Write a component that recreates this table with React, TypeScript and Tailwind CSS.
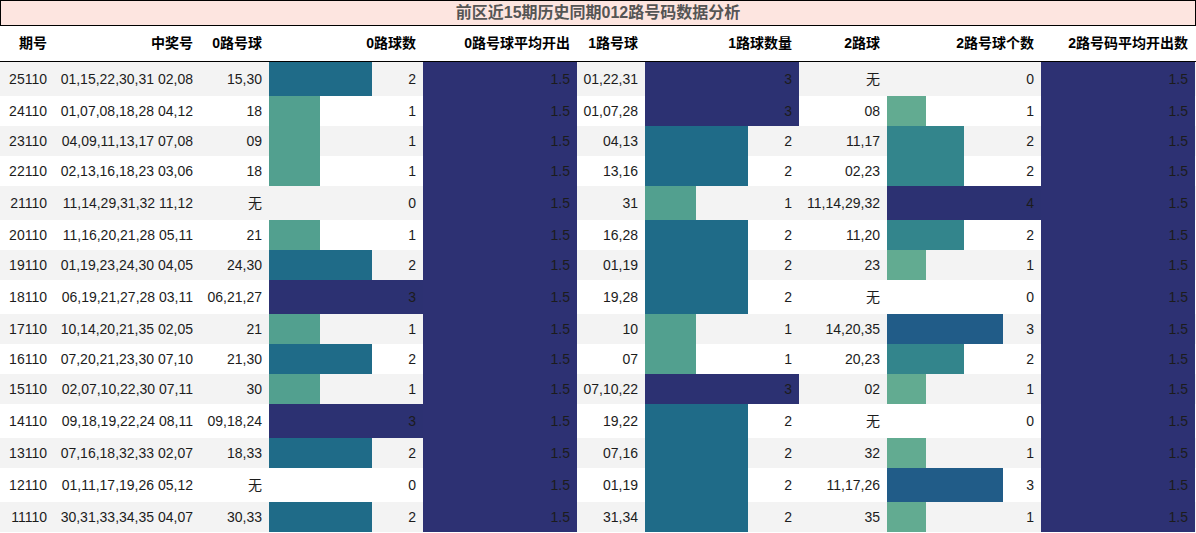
import React from 'react';

interface DrawRow {
  period: string;
  numbers: string;
  zeroBalls: string;
  zeroCount: number;
  oneBalls: string;
  oneCount: number;
  twoBalls: string;
  twoCount: number;
}

const rows: DrawRow[] = [
  { period: '25110', numbers: '01,15,22,30,31 02,08', zeroBalls: '15,30', zeroCount: 2, oneBalls: '01,22,31', oneCount: 3, twoBalls: '无', twoCount: 0 },
  { period: '24110', numbers: '01,07,08,18,28 04,12', zeroBalls: '18', zeroCount: 1, oneBalls: '01,07,28', oneCount: 3, twoBalls: '08', twoCount: 1 },
  { period: '23110', numbers: '04,09,11,13,17 07,08', zeroBalls: '09', zeroCount: 1, oneBalls: '04,13', oneCount: 2, twoBalls: '11,17', twoCount: 2 },
  { period: '22110', numbers: '02,13,16,18,23 03,06', zeroBalls: '18', zeroCount: 1, oneBalls: '13,16', oneCount: 2, twoBalls: '02,23', twoCount: 2 },
  { period: '21110', numbers: '11,14,29,31,32 11,12', zeroBalls: '无', zeroCount: 0, oneBalls: '31', oneCount: 1, twoBalls: '11,14,29,32', twoCount: 4 },
  { period: '20110', numbers: '11,16,20,21,28 05,11', zeroBalls: '21', zeroCount: 1, oneBalls: '16,28', oneCount: 2, twoBalls: '11,20', twoCount: 2 },
  { period: '19110', numbers: '01,19,23,24,30 04,05', zeroBalls: '24,30', zeroCount: 2, oneBalls: '01,19', oneCount: 2, twoBalls: '23', twoCount: 1 },
  { period: '18110', numbers: '06,19,21,27,28 03,11', zeroBalls: '06,21,27', zeroCount: 3, oneBalls: '19,28', oneCount: 2, twoBalls: '无', twoCount: 0 },
  { period: '17110', numbers: '10,14,20,21,35 02,05', zeroBalls: '21', zeroCount: 1, oneBalls: '10', oneCount: 1, twoBalls: '14,20,35', twoCount: 3 },
  { period: '16110', numbers: '07,20,21,23,30 07,10', zeroBalls: '21,30', zeroCount: 2, oneBalls: '07', oneCount: 1, twoBalls: '20,23', twoCount: 2 },
  { period: '15110', numbers: '02,07,10,22,30 07,11', zeroBalls: '30', zeroCount: 1, oneBalls: '07,10,22', oneCount: 3, twoBalls: '02', twoCount: 1 },
  { period: '14110', numbers: '09,18,19,22,24 08,11', zeroBalls: '09,18,24', zeroCount: 3, oneBalls: '19,22', oneCount: 2, twoBalls: '无', twoCount: 0 },
  { period: '13110', numbers: '07,16,18,32,33 02,07', zeroBalls: '18,33', zeroCount: 2, oneBalls: '07,16', oneCount: 2, twoBalls: '32', twoCount: 1 },
  { period: '12110', numbers: '01,11,17,19,26 05,12', zeroBalls: '无', zeroCount: 0, oneBalls: '01,19', oneCount: 2, twoBalls: '11,17,26', twoCount: 3 },
  { period: '11110', numbers: '30,31,33,34,35 04,07', zeroBalls: '30,33', zeroCount: 2, oneBalls: '31,34', oneCount: 2, twoBalls: '35', twoCount: 1 },
];

const headers = [
  '期号',
  '中奖号',
  '0路号球',
  '0路球数',
  '0路号球平均开出',
  '1路号球',
  '1路球数量',
  '2路球',
  '2路号球个数',
  '2路号码平均开出数',
];

// colour steps of the bars (crest-like scale)
const colorsOf3 = ['', '#52a08f', '#1f6b88', '#2c3172'];
const colorsOf4 = ['', '#62ab91', '#33858c', '#215c88', '#2c3172'];
const avgColor = '#2d3173';

const gridCols =
  'grid grid-cols-[54px_146px_69px_154px_154px_68px_154px_88px_154px_154px]';

const BarCell: React.FC<{ value: number; max: number; color: string; label: string }> = ({
  value,
  max,
  color,
  label,
}) => (
  <div className="relative flex items-center justify-end pr-[7px]">
    {value > 0 && (
      <div
        className="absolute left-0 top-0 bottom-0"
        style={{ width: `${(value / max) * 100}%`, backgroundColor: color }}
      />
    )}
    <span className="relative">{label}</span>
  </div>
);

const TextCell: React.FC<{ children: React.ReactNode }> = ({ children }) => (
  <div className="flex items-center justify-end pr-[7px] whitespace-nowrap">{children}</div>
);

export default function App() {
  return (
    <div
      className="w-[1196px] bg-white text-[14px] text-[#1c1c1c]"
      style={{ fontFamily: '"Liberation Sans", "Noto Sans CJK SC", sans-serif' }}
    >
      {/* Title */}
      <div className="w-[1196px] h-[26px] border border-black bg-[#fde5e0] flex items-center justify-center">
        <span className="text-[16px] font-bold text-[#555555] leading-none">
          前区近15期历史同期012路号码数据分析
        </span>
      </div>

      {/* Header */}
      <div className={`${gridCols} h-[36px] border-b border-black font-bold text-black`}>
        {headers.map((h) => (
          <div key={h} className="flex items-center justify-end pr-[7px] whitespace-nowrap">
            {h}
          </div>
        ))}
      </div>

      {/* Rows */}
      {rows.map((r, i) => {
        const tall = [r.zeroBalls, r.oneBalls, r.twoBalls].includes('无');
        return (
          <div
            key={r.period}
            className={`${gridCols} ${tall ? 'h-[34px]' : 'h-[30px]'} ${
              i % 2 === 0 ? 'bg-[#f3f3f3]' : 'bg-white'
            }`}
          >
            <TextCell>{r.period}</TextCell>
            <TextCell>{r.numbers}</TextCell>
            <TextCell>{r.zeroBalls}</TextCell>
            <BarCell value={r.zeroCount} max={3} color={colorsOf3[r.zeroCount]} label={String(r.zeroCount)} />
            <BarCell value={1.5} max={1.5} color={avgColor} label="1.5" />
            <TextCell>{r.oneBalls}</TextCell>
            <BarCell value={r.oneCount} max={3} color={colorsOf3[r.oneCount]} label={String(r.oneCount)} />
            <TextCell>{r.twoBalls}</TextCell>
            <BarCell value={r.twoCount} max={4} color={colorsOf4[r.twoCount]} label={String(r.twoCount)} />
            <BarCell value={1.5} max={1.5} color={avgColor} label="1.5" />
          </div>
        );
      })}
    </div>
  );
}
